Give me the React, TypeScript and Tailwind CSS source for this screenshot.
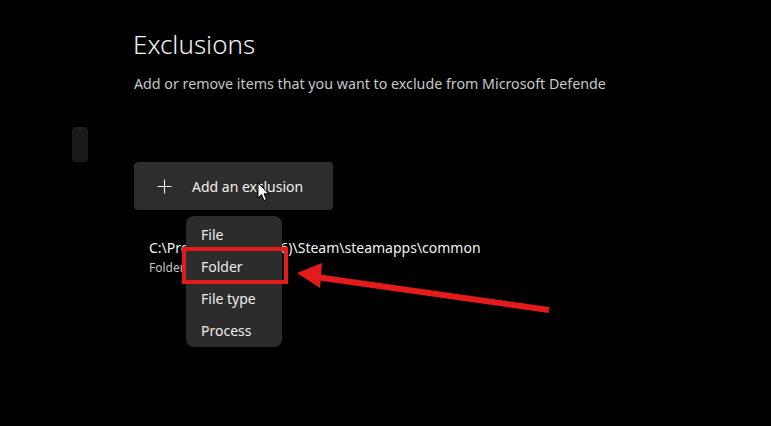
const menuItems = ['File', 'Folder', 'File type', 'Process'];

export default function App() {
  return (
    <div className="relative flex w-[771px] h-[426px] overflow-hidden bg-black text-white font-['Noto_Sans',sans-serif]">
      <div className="w-[133px] shrink-0 pl-[72px] pt-[127px]">
        <div className="w-4 h-[35px] rounded bg-[#1a1a1a]" />
      </div>

      <div className="flex flex-col pt-[26px]">
        <h1 className="text-[26px] leading-[36px] font-light text-[#f2f2f2]">Exclusions</h1>
        <p className="mt-[12px] w-[473px] overflow-hidden whitespace-nowrap text-[14.25px] leading-5 text-[#c8c8c8] pl-px">
          Add or remove items that you want to exclude from Microsoft Defender Antivirus scans.
        </p>

        <div className="ml-px">
          <button className="mt-[68px] flex h-12 w-[199px] items-center rounded bg-[#2d2d2d] pl-[23px] text-[14px] text-[#f0f0f0]">
            <svg width="15" height="15" viewBox="0 0 15 15" className="shrink-0">
              <path d="M7.5 0.5v14M0.5 7.5h14" stroke="#f0f0f0" strokeWidth="1.1" fill="none" />
            </svg>
            <span className="ml-[20px]">Add an exclusion</span>
          </button>

          <div className="mt-[28px] pl-[15px] flex flex-col">
            <span className="text-[14px] leading-5 text-[#f2f2f2]">C:\Program Files (x86)\Steam\steamapps\common</span>
            <span className="text-[12px] leading-5 text-[#c5c5c5]">Folder</span>
          </div>
        </div>
      </div>

      {/* dropdown menu */}
      <div className="absolute left-[186px] top-[216px] w-[96px] h-[131px] rounded-lg bg-[#2c2c2c] pt-[2px] shadow-lg">
        {menuItems.map((item) => (
          <div key={item} className="flex h-8 items-center pl-[15px] text-[14px] text-[#ededed]">
            {item}
          </div>
        ))}
      </div>

      {/* highlight box */}
      <div className="absolute left-[182px] top-[247px] w-[106px] h-[37px] border-[4px] border-[#e31b1b]" />

      {/* red arrow */}
      <svg className="absolute inset-0 pointer-events-none" width="771" height="426">
        <line x1="549" y1="310" x2="316" y2="277" stroke="#e31b1b" strokeWidth="6" />
        <polygon points="297,273 322,263 320,288" fill="#e31b1b" />
      </svg>

      {/* mouse cursor */}
      <svg className="absolute left-[257px] top-[182px]" width="13" height="20" viewBox="0 0 13 20">
        <path d="M1 1 L1 16 L4.5 12.5 L7 18.5 L9.5 17.5 L7 11.8 L12 11.8 Z" fill="#fff" stroke="#000" strokeWidth="1" strokeLinejoin="round" />
      </svg>
    </div>
  );
}
